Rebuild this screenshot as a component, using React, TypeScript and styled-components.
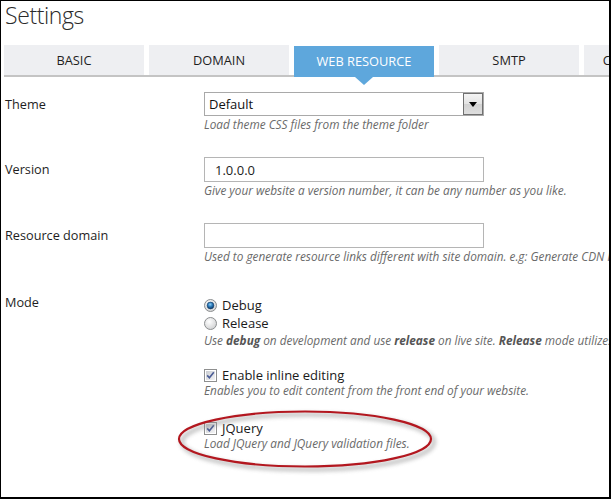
import React from "react";
import styled, { createGlobalStyle } from "styled-components";

const Global = createGlobalStyle`
  html, body { margin: 0; padding: 0; background: #fff; overflow: hidden; }
  * { box-sizing: border-box; }
`;

const Frame = styled.div`
  position: relative;
  width: 611px;
  height: 499px;
  border-left: 1px solid #000;
  border-top: 1px solid #000;
  border-right: 2px solid #000;
  border-bottom: 2px solid #000;
  overflow: hidden;
  background: #fff;
  font-family: "Open Sans", "Noto Sans", sans-serif;
  color: #1e1e1e;
  padding-left: 3px;
`;

const Title = styled.h1`
  margin: 0;
  height: 44px;
  padding-left: 1px;
  font-size: 23px;
  font-weight: 300;
  letter-spacing: -0.4px;
  line-height: 28px;
  color: #2a2a2a;
  white-space: nowrap;
`;

const TabBar = styled.div`
  display: flex;
  gap: 5px;
  height: 32px;
  width: 1000px;
  border-bottom: 2px solid #c4c4c4;
`;

const Tab = styled.div<{ $active?: boolean }>`
  position: relative;
  flex: 0 0 140px;
  height: ${(p) => (p.$active ? "31px" : "30px")};
  margin-top: ${(p) => (p.$active ? "1px" : "0")};
  margin-bottom: ${(p) => (p.$active ? "-2px" : "0")};
  display: flex;
  align-items: center;
  justify-content: center;
  padding-bottom: ${(p) => (p.$active ? "1px" : "0")};
  background: ${(p) => (p.$active ? "#5ea7dc" : "#eeeff2")};
  color: ${(p) => (p.$active ? "#fff" : "#1e1e1e")};
  font-size: 12.8px;
  text-transform: uppercase;
  white-space: nowrap;

  ${(p) =>
    p.$active &&
    `
    &::after {
      content: "";
      position: absolute;
      top: 100%;
      left: 50%;
      transform: translateX(-50%);
      border-left: 9px solid transparent;
      border-right: 9px solid transparent;
      border-top: 8px solid #5ea7dc;
    }
  `}
`;

const Form = styled.div`
  margin-top: 15px;
  display: flex;
  flex-direction: column;
`;

const Row = styled.div<{ $gap: number }>`
  display: grid;
  grid-template-columns: 200px 1fr;
  margin-bottom: ${(p) => p.$gap}px;
`;

const Label = styled.div<{ $line?: number }>`
  padding-left: 1px;
  font-size: 12.7px;
  line-height: ${(p) => p.$line ?? 24}px;
  color: #1e1e1e;
  white-space: nowrap;
`;

const Control = styled.div`
  display: flex;
  flex-direction: column;
  min-width: 0;
`;

const Help = styled.div<{ $line?: number }>`
  font-size: 11.8px;
  font-style: italic;
  line-height: ${(p) => p.$line ?? 16}px;
  color: #6a6a6a;
  white-space: nowrap;
  b { font-weight: 700; color: #555; }
`;

const SelectBox = styled.div`
  position: relative;
  width: 280px;
  height: 24px;
  border: 1px solid #a9a9a9;
  display: flex;
  align-items: center;
  padding-left: 4px;
  font-size: 13px;
  color: #111;
`;

const DropButton = styled.div`
  margin-left: auto;
  width: 20px;
  height: 22px;
  border: 1px solid #707070;
  background: linear-gradient(#f4f4f4, #e3e3e3 50%, #d2d2d2 51%, #dedede);
  display: flex;
  align-items: center;
  justify-content: center;
`;

const TextBox = styled.div`
  width: 280px;
  height: 25px;
  border: 1px solid #b5b5b5;
  padding-left: 10px;
  display: flex;
  align-items: center;
  font-size: 13px;
  color: #222;
`;

const Option = styled.div<{ $line?: number }>`
  display: flex;
  align-items: center;
  gap: 5px;
  height: ${(p) => p.$line ?? 18}px;
  font-size: 13px;
  line-height: ${(p) => p.$line ?? 18}px;
  color: #1a1a1a;
  white-space: nowrap;
`;

const Overlay = styled.svg`
  position: absolute;
  left: 160px;
  top: 394px;
  pointer-events: none;
`;

const Radio: React.FC<{ checked?: boolean }> = ({ checked }) => (
  <svg width="13" height="13" viewBox="0 0 13 13">
    <defs>
      <radialGradient id="rg" cx="40%" cy="35%" r="70%">
        <stop offset="0" stopColor="#ffffff" />
        <stop offset="1" stopColor="#cfd0d1" />
      </radialGradient>
      <radialGradient id="dot" cx="45%" cy="35%" r="65%">
        <stop offset="0" stopColor="#8fd0f7" />
        <stop offset="0.5" stopColor="#2b79b8" />
        <stop offset="1" stopColor="#0b3563" />
      </radialGradient>
    </defs>
    <circle cx="6.5" cy="6.5" r="6" fill="url(#rg)" stroke="#8c8e90" strokeWidth="1" />
    {checked && <circle cx="6.5" cy="6.5" r="3.4" fill="url(#dot)" stroke="#173f69" strokeWidth="0.6" />}
  </svg>
);

const Check: React.FC = () => (
  <svg width="13" height="13" viewBox="0 0 13 13">
    <defs>
      <linearGradient id="cg" x1="0" y1="0" x2="1" y2="1">
        <stop offset="0" stopColor="#c9ccd1" />
        <stop offset="1" stopColor="#f4f4f5" />
      </linearGradient>
    </defs>
    <rect x="0.5" y="0.5" width="12" height="12" fill="#fff" stroke="#8e8f8f" />
    <rect x="2" y="2" width="9" height="9" fill="url(#cg)" />
    <path d="M3.2 6.4 L5.4 8.8 L9.8 3.2" fill="none" stroke="#4a5c95" strokeWidth="1.6" />
  </svg>
);

export default function App() {
  return (
    <>
      <Global />
      <Frame>
        <Title>Settings</Title>
        <TabBar>
          <Tab>Basic</Tab>
          <Tab>Domain</Tab>
          <Tab $active>Web Resource</Tab>
          <Tab>SMTP</Tab>
          <Tab>Configuration</Tab>
        </TabBar>
        <Form>
          <Row $gap={25}>
            <Label>Theme</Label>
            <Control>
              <SelectBox>
                Default
                <DropButton>
                  <svg width="8" height="5" viewBox="0 0 8 5">
                    <path d="M0 0 H8 L4 5 Z" fill="#000" />
                  </svg>
                </DropButton>
              </SelectBox>
              <Help>Load theme CSS files from the theme folder</Help>
            </Control>
          </Row>
          <Row $gap={25}>
            <Label>Version</Label>
            <Control>
              <TextBox>1.0.0.0</TextBox>
              <Help>Give your website a version number, it can be any number as you like.</Help>
            </Control>
          </Row>
          <Row $gap={32}>
            <Label>Resource domain</Label>
            <Control>
              <TextBox />
              <Help>Used to generate resource links different with site domain. e.g: Generate CDN links</Help>
            </Control>
          </Row>
          <Row $gap={19}>
            <Label $line={13}>Mode</Label>
            <Control>
              <Option>
                <Radio checked />
                Debug
              </Option>
              <Option>
                <Radio />
                Release
              </Option>
              <Help>
                Use <b>debug</b> on development and use <b>release</b> on live site. <b>Release</b> mode utilizes
                bundling and minification
              </Help>
            </Control>
          </Row>
          <Row $gap={23}>
            <Label />
            <Control>
              <Option $line={16}>
                <Check />
                Enable inline editing
              </Option>
              <Help $line={14}>Enables you to edit content from the front end of your website.</Help>
            </Control>
          </Row>
          <Row $gap={0}>
            <Label />
            <Control>
              <Option $line={16}>
                <Check />
                JQuery
              </Option>
              <Help $line={14}>Load JQuery and JQuery validation files.</Help>
            </Control>
          </Row>
        </Form>
        <Overlay width="300" height="100" viewBox="0 0 300 100">
          <defs>
            <filter id="blur" x="-20%" y="-50%" width="140%" height="200%">
              <feGaussianBlur stdDeviation="2" />
            </filter>
          </defs>
          <ellipse cx="147" cy="47" rx="126" ry="27.5" fill="none" stroke="#8a8a8a" strokeWidth="3.5" opacity="0.6" filter="url(#blur)" />
          <ellipse cx="144" cy="44" rx="126" ry="27.5" fill="none" stroke="#b3171f" strokeWidth="2.2" />
        </Overlay>
      </Frame>
    </>
  );
}
